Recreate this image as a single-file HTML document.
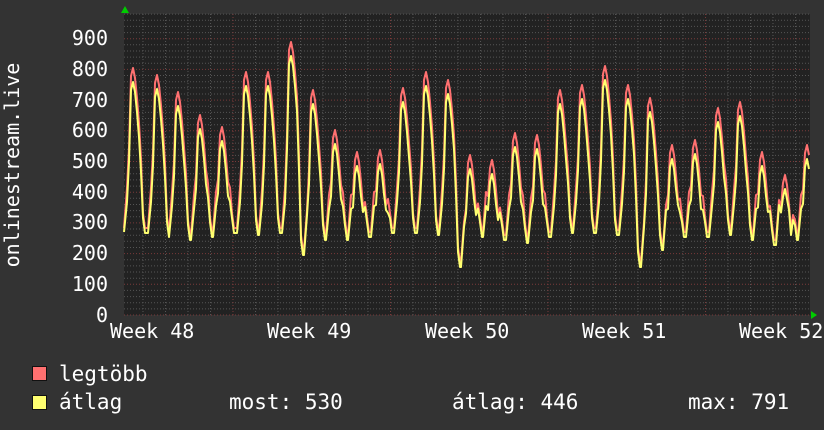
<!DOCTYPE html>
<html><head><meta charset="utf-8"><style>
html,body{margin:0;padding:0;background:#333;}
body{width:824px;height:430px;overflow:hidden;position:relative;font-family:"DejaVu Sans Mono","Liberation Mono",monospace;color:#fff;}
.t{position:absolute;font-size:21px;line-height:21px;white-space:pre;}
.yl{position:absolute;right:716px;font-size:20px;line-height:20px;}
.sq{position:absolute;width:13px;height:13px;border:1px solid #111;}
</style></head><body>
<svg id="g" width="824" height="430" style="position:absolute;left:0;top:0">
<rect x="124" y="14" width="686" height="301" fill="#222"/>
<g id="grid"></g>
<polyline id="mx" fill="none" stroke="#ff7070" stroke-width="2" stroke-linejoin="round"/>
<polyline id="av" fill="none" stroke="#ffff70" stroke-width="2" stroke-linejoin="round"/>
<polygon points="121,13 125,6 129,13" fill="#0c0"/>
<polygon points="811,311 817,315 811,319" fill="#0c0"/>
</svg>
<div class="yl" style="top:28px">900</div>
<div class="yl" style="top:59px">800</div>
<div class="yl" style="top:90px">700</div>
<div class="yl" style="top:120px">600</div>
<div class="yl" style="top:151px">500</div>
<div class="yl" style="top:182px">400</div>
<div class="yl" style="top:212px">300</div>
<div class="yl" style="top:243px">200</div>
<div class="yl" style="top:274px">100</div>
<div class="yl" style="top:305px">0</div>
<div class="t" style="left:-138px;top:155px;width:300px;text-align:center;transform:rotate(-90deg);font-size:20px;line-height:20px">onlinestream.live</div>
<div class="t" style="left:110px;top:321px;font-size:20px">Week 48</div>
<div class="t" style="left:267px;top:321px;font-size:20px">Week 49</div>
<div class="t" style="left:425px;top:321px;font-size:20px">Week 50</div>
<div class="t" style="left:582px;top:321px;font-size:20px">Week 51</div>
<div class="t" style="left:739px;top:321px;font-size:20px">Week 52</div>
<div class="sq" style="left:32px;top:366px;background:#ff7070"></div>
<div class="sq" style="left:32px;top:395px;background:#ffff70"></div>
<div class="t" style="left:59px;top:364px">legtöbb</div>
<div class="t" style="left:59px;top:392px">átlag</div>
<div class="t" style="left:229px;top:392px">most: 530</div>
<div class="t" style="left:452px;top:392px">átlag: 446</div>
<div class="t" style="left:688px;top:392px">max: 791</div>
<script>
var G=document.getElementById("grid"),s="";
for(var y=315;y>=14;y-=6.14){var f=((315-y)/30.7)%1;var maj=f<0.05||f>0.95;
s+='<line x1="124" x2="810" y1="'+y.toFixed(1)+'" y2="'+y.toFixed(1)+'" stroke="'+(maj?'#7a3a3a':'#555')+'" stroke-dasharray="1,2"/>';}
for(var i=-5;i<40;i++){var x=233+i*22.5;if(x<124||x>810)continue;var maj=(i%7==0);
s+='<line y1="14" y2="315" x1="'+x+'" x2="'+x+'" stroke="'+(maj?'#7a3a3a':'#555')+'" stroke-dasharray="1,2"/>';}
G.innerHTML=s;
var px=[133,157,178,200,222,246,268,291,313,335,357,380,403,426,448,470,492,515,537,560,582,605,628,650,672,695,718,740,762,785,807];
var pk=[68,75,92,115,127,72,72,42,90,130,152,150,88,72,80,155,160,133,135,90,85,66,85,98,145,140,108,102,152,175,145];
var tr=[228,228,232,235,232,228,230,228,250,235,235,232,228,228,230,262,232,235,238,232,228,228,230,262,245,232,232,230,235,240,235];
var m=[],a=[];m.push([124,228]);a.push([124,232]);
for(var k=0;k<px.length;k++){var x=px[k],p=pk[k],t=tr[k],nt=tr[k+1]||t;
var pts=[[x-9,t],[x-6,t-40],[x-4,(p+t)/2],[x-2,p+8],[x,p],[x+2,p+10],[x+4,p+30],[x+6,p+55],[x+8,(p+nt)/2+10],[x+10,nt-15],[x+12,nt]];
pts.forEach(function(q){if(q[0]>124&&q[0]<=810){m.push(q);a.push([q[0],Math.min(q[1]+(q[1]<200?14:5),318)]);}});}
document.getElementById("mx").setAttribute("points",m.map(function(q){return q.join(",")}).join(" "));
document.getElementById("av").setAttribute("points",a.map(function(q){return q.join(",")}).join(" "));
</script>
</body></html>
